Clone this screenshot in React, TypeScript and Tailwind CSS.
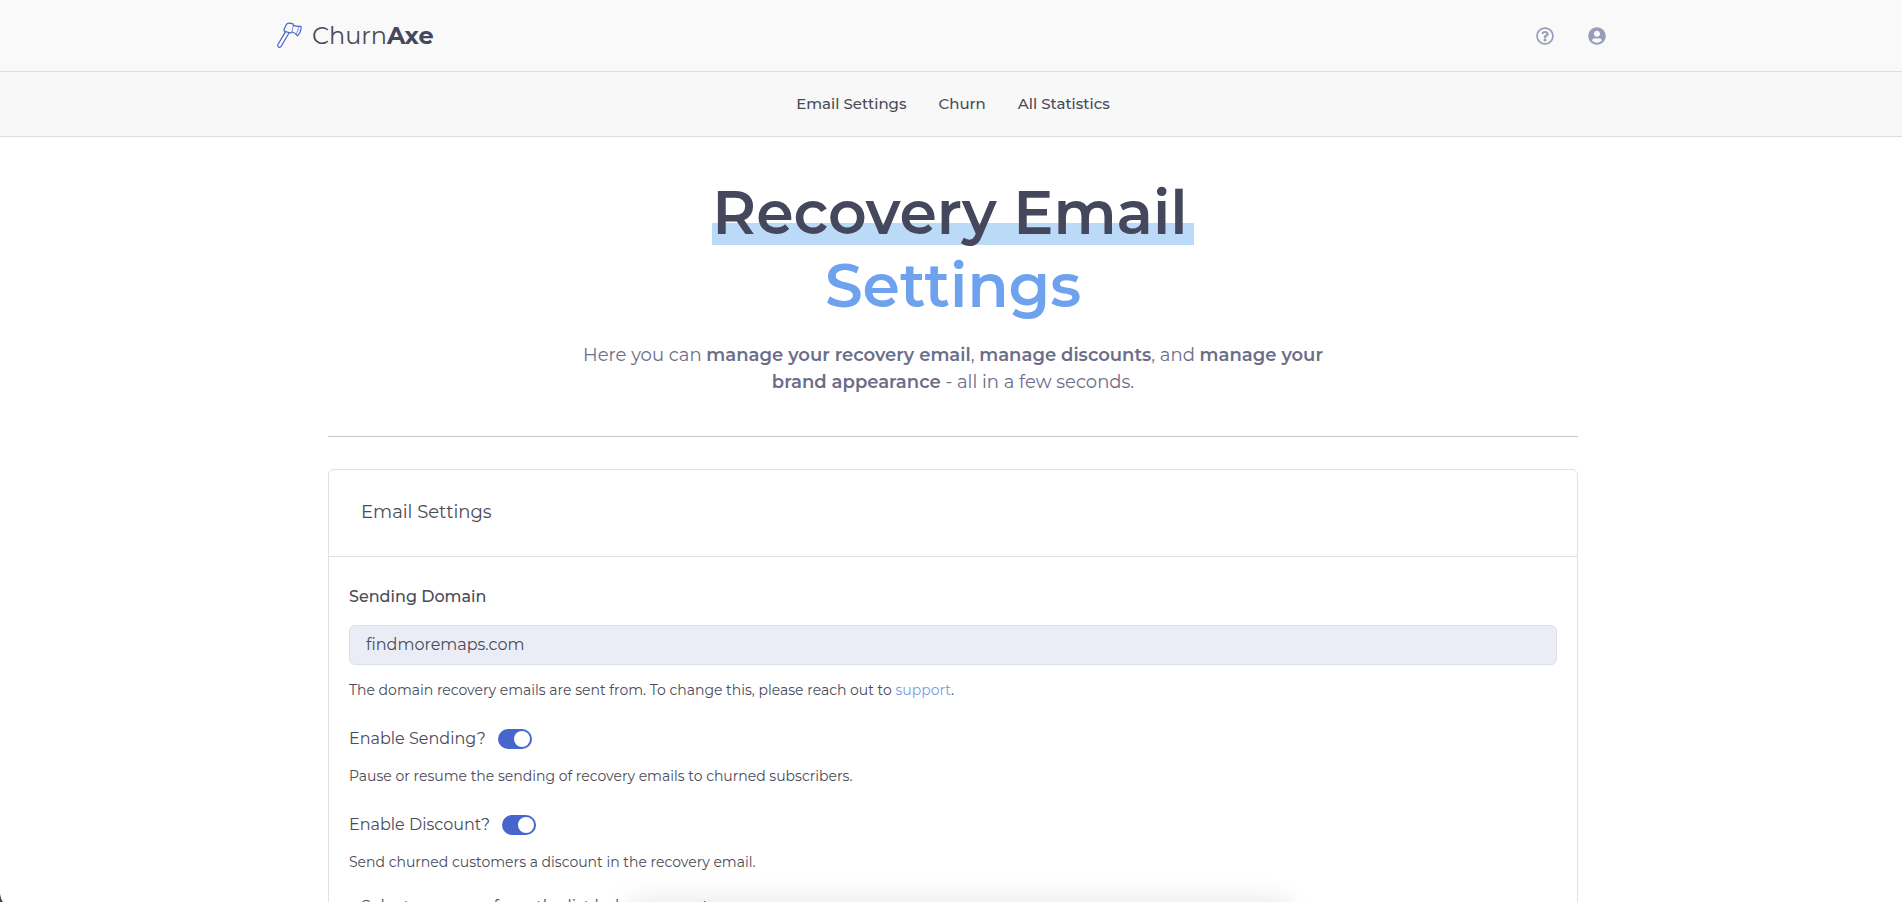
import React from "react";

function AxeLogo() {
  return (
    <svg viewBox="0 0 26 28" className="h-7 w-[26px]" fill="none" stroke="#4b63c9" strokeWidth="1.2" strokeLinejoin="round" aria-hidden="true">
      <path d="M9.600 9.600 1.800 22.800q-.5 1.600.9 2.300 1.600.7 2.500-.8L13 11" />
      <path d="M10.400 2.400q1.200-1.700 3-1.300l3.600.8.300 1.500q4 1.500 7.700.9.400 5.800-3.500 9.500-2-2.900-5.500-3.800l-1.500 1-5.700-1.600q-1.100-.7-.7-2.200z" />
      <path d="m17.300 3.400-1.300 6.600M22.400 4.600q.2 4.400-2.500 7.700" strokeWidth=".7" />
    </svg>
  );
}

function HelpIcon() {
  return (
    <svg viewBox="0 0 512 512" className="size-[18px]" fill="currentColor" aria-hidden="true">
      <path d="M256 8C119 8 8 119 8 256s111 248 248 248 248-111 248-248S393 8 256 8zm0 448c-110.500 0-200-89.400-200-200 0-110.500 89.500-200 200-200 110.500 0 200 89.500 200 200 0 110.500-89.400 200-200 200zm107.200-255.200c0 67.100-72.400 68.100-72.400 92.900V300c0 6.600-5.400 12-12 12h-45.600c-6.600 0-12-5.400-12-12v-8.700c0-35.700 27.100-50 47.600-61.500 17.600-9.800 28.300-16.500 28.300-29.600 0-17.200-22-28.700-39.800-28.700-23.200 0-33.900 11-48.900 30-4.100 5.100-11.500 6.100-16.700 2.100l-27.800-21.100c-5.100-3.900-6.300-11.100-2.600-16.400C184.800 131.500 214.900 112 261.800 112c49.100 0 101.500 38.300 101.500 88.800zM298 368c0 23.200-18.800 42-42 42s-42-18.800-42-42 18.800-42 42-42 42 18.800 42 42z" />
    </svg>
  );
}

function UserIcon() {
  return (
    <svg viewBox="0 0 496 512" className="size-[18px]" fill="currentColor" aria-hidden="true">
      <path d="M248 8C111 8 0 119 0 256s111 248 248 248 248-111 248-248S385 8 248 8zm0 96c48.600 0 88 39.400 88 88s-39.400 88-88 88-88-39.400-88-88 39.400-88 88-88zm0 344c-58.700 0-111.300-26.600-146.500-68.200 18.800-35.400 55.600-59.800 98.500-59.800 2.400 0 4.800.4 7.100 1.100 13 4.200 26.600 6.900 40.900 6.900s28-2.700 40.900-6.900c2.300-.7 4.700-1.100 7.100-1.100 42.900 0 79.700 24.400 98.500 59.800C359.300 421.400 306.700 448 248 448z" />
    </svg>
  );
}

function Toggle({ id, label, help }: { id: string; label: string; help: string }) {
  return (
    <div>
      <div className="flex h-7 items-center gap-3">
        <label htmlFor={id} className="text-base">{label}</label>
        <input
          id={id}
          type="checkbox"
          role="switch"
          defaultChecked
          className="flex h-5 w-[34px] cursor-pointer appearance-none items-center rounded-full bg-gray-300 px-[2px] before:size-4 before:rounded-full before:bg-white checked:justify-end checked:bg-[#4766cb]"
        />
      </div>
      <p className="mt-3 text-sm leading-[22px]">{help}</p>
    </div>
  );
}

export default function App() {
  return (
    <div className="min-h-screen bg-white font-['Montserrat','Inter',sans-serif] text-[#4a4b58]">
      <header className="border-b border-[#dcdede] bg-[#f9f9f9]">
        <div className="mx-auto flex h-[71px] max-w-[1350px] items-center justify-between pr-5">
          <a href="#" className="flex items-center gap-2.5 text-2xl">
            <AxeLogo />
            <span>Churn<b className="font-bold text-[#45475c]">Axe</b></span>
          </a>
          <div className="flex items-center gap-[34px] text-[#9a9db8]">
            <button type="button" aria-label="Help"><HelpIcon /></button>
            <button type="button" aria-label="Account"><UserIcon /></button>
          </div>
        </div>
      </header>
      <nav className="flex h-[65px] items-center justify-center gap-8 border-b border-[#dcdede] bg-[#f8f8f9] pl-1 text-[15px] font-medium">
        <a href="#">Email Settings</a>
        <a href="#">Churn</a>
        <a href="#">All Statistics</a>
      </nav>

      <div className="pl-1">
        <main className="mx-auto max-w-[1250px]">
          <section className="mx-auto max-w-[780px] pt-[39px] text-center">
            <h1 className="text-[60px] leading-[73px] font-semibold text-[#45475c]">
              <span className="bg-[linear-gradient(transparent_64%,#bbdaf7_64%,#bbdaf7_94%,transparent_94%)] pr-1.5">Recovery Email</span>
              <br />
              <span className="text-[#6ea1ee]">Settings</span>
            </h1>
            <p className="mt-5 text-lg leading-[27px] text-[#6c6e88]">
              Here you can <b className="font-semibold">manage your recovery email</b>, <b className="font-semibold">manage discounts</b>, and <b className="font-semibold">manage your brand appearance</b> - all in a few seconds.
            </p>
          </section>
          <hr className="mt-10 border-[#c6c7ca]" />

          <section className="mt-8 rounded-md border border-[#dfe1e3]">
            <h2 className="flex h-[87px] items-center border-b border-[#dfe1e3] px-8 pb-0.5 text-lg">Email Settings</h2>
            <div className="px-5 pt-7">
              <label htmlFor="domain" className="block text-base leading-6 font-medium">Sending Domain</label>
              <input
                id="domain"
                readOnly
                defaultValue="findmoremaps.com"
                className="mt-4 block h-10 w-full rounded-md border border-[#dde0e6] bg-[#eaedf6] px-4 pb-0.5 text-base"
              />
              <p className="mt-[14px] mb-6 text-sm leading-[22px]">
                The domain recovery emails are sent from. To change this, please reach out to <a href="#" className="text-[#76a0e0]">support</a>.
              </p>
              <div className="flex flex-col gap-6">
                <Toggle id="sending" label="Enable Sending?" help="Pause or resume the sending of recovery emails to churned subscribers." />
                <Toggle id="discount" label="Enable Discount?" help="Send churned customers a discount in the recovery email." />
              </div>
              <p className="mt-[22px] px-3 text-base leading-6">Select a coupon from the list below or create</p>
            </div>
          </section>
        </main>
      </div>
      <div className="fixed top-full left-1/2 h-10 w-[660px] -translate-x-1/2 shadow-[8px_0_28px_rgba(0,0,0,0.11)]" />
      <svg viewBox="0 0 3 8" className="fixed bottom-0 left-0 h-2 w-[3px]" fill="#444" aria-hidden="true">
        <path d="M0 0Q.6 5 3 8H0z" />
      </svg>
    </div>
  );
}
